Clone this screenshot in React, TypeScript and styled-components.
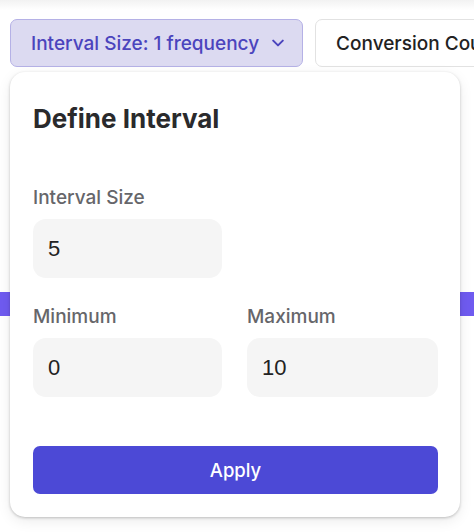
import React from "react";
import styled, { createGlobalStyle } from "styled-components";

const Global = createGlobalStyle`
  html, body { margin: 0; padding: 0; background: #ffffff; }
  body { font-family: "Inter", "Noto Sans", sans-serif; }
  * { box-sizing: border-box; }
`;

const Page = styled.div`
  position: relative;
  width: 474px;
  height: 532px;
  overflow: hidden;
  background: linear-gradient(#f2f2f2 0px, #ffffff 10px);
`;

const Toolbar = styled.div`
  display: flex;
  gap: 12px;
  padding: 19px 0 0 10px;
  white-space: nowrap;
`;

const FilterButton = styled.button<{ $active?: boolean }>`
  display: flex;
  align-items: center;
  gap: 13px;
  height: 48px;
  padding: 0 18px 0 20px;
  border-radius: 7px;
  border: 1px solid ${(p) => (p.$active ? "#b5b1e6" : "#e2e2e2")};
  background: ${(p) => (p.$active ? "#dcdaf1" : "#ffffff")};
  color: ${(p) => (p.$active ? "#4b44bd" : "#222222")};
  font-family: "Inter", sans-serif;
  font-size: 19px;
  font-weight: 500;
  flex-shrink: 0;
`;

const Strip = styled.div`
  margin-top: 225px;
  height: 24px;
  background: #6f5bf0;
`;

const Popover = styled.div`
  position: absolute;
  top: 72px;
  left: 10px;
  width: 450px;
  height: 445px;
  background: #ffffff;
  border-radius: 15px;
  box-shadow: 0 1px 3px rgba(0, 0, 0, 0.22), 0 4px 14px rgba(0, 0, 0, 0.08);
  padding: 30px 22px 23px 23px;
  display: flex;
  flex-direction: column;
`;

const Title = styled.h2`
  margin: 0;
  font-family: "Inter", sans-serif;
  font-size: 26px;
  font-weight: 700;
  color: #2a2a2c;
  line-height: 34px;
`;

const Fields = styled.div`
  display: grid;
  grid-template-columns: 189px 191px;
  column-gap: 25px;
  row-gap: 28px;
  margin-top: 51px;
`;

const Field = styled.label<{ $col?: number }>`
  display: flex;
  flex-direction: column;
  gap: 10px;
  grid-column: ${(p) => p.$col ?? "auto"};
`;

const Label = styled.span`
  font-family: "Inter", sans-serif;
  font-size: 19px;
  font-weight: 500;
  color: #66666a;
  line-height: 22px;
`;

const Input = styled.input`
  height: 59px;
  width: 100%;
  border: none;
  outline: none;
  border-radius: 13px;
  background: #f5f5f5;
  padding: 0 15px;
  font-family: "Liberation Sans", Arial, sans-serif;
  font-size: 22px;
  color: #222222;
`;

const Apply = styled.button`
  margin-top: auto;
  height: 48px;
  width: 100%;
  border: none;
  border-radius: 7px;
  background: #4c49d6;
  color: #ffffff;
  font-family: "Inter", sans-serif;
  font-size: 18.5px;
  font-weight: 500;
`;

const Chevron = () => (
  <svg width="12" height="12" viewBox="0 0 12 12" fill="none">
    <path d="M1.2 3.6 L6 8.4 L10.8 3.6" stroke="#4b44bd" strokeWidth="2" strokeLinecap="round" strokeLinejoin="round" />
  </svg>
);

export default function App() {
  return (
    <Page>
      <Global />
      <Toolbar>
        <FilterButton $active>
          Interval Size: 1 frequency
          <Chevron />
        </FilterButton>
        <FilterButton>Conversion Count</FilterButton>
      </Toolbar>
      <Strip />
      <Popover>
        <Title>Define Interval</Title>
        <Fields>
          <Field $col={1}>
            <Label>Interval Size</Label>
            <Input defaultValue="5" />
          </Field>
          <Field $col={1}>
            <Label>Minimum</Label>
            <Input defaultValue="0" />
          </Field>
          <Field>
            <Label>Maximum</Label>
            <Input defaultValue="10" />
          </Field>
        </Fields>
        <Apply>Apply</Apply>
      </Popover>
    </Page>
  );
}
